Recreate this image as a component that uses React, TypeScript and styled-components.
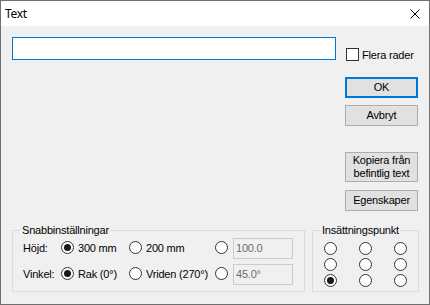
import * as React from 'react'
import styled, { createGlobalStyle } from 'styled-components'

const GlobalStyle = createGlobalStyle`
    html, body {
        margin: 0;
        padding: 0;
        background: #f0f0f0;
        overflow: hidden;
    }
    * {
        box-sizing: border-box;
    }
`

const App = () => (
    <>
        <GlobalStyle />
        <Window>
            <TitleBar>
                <Title>Text</Title>
                <CloseButton>
                    <svg width="10" height="10" viewBox="0 0 10 10">
                        <path d="M0.5 0.5 L9.5 9.5 M9.5 0.5 L0.5 9.5" stroke="#000" strokeWidth="1" />
                    </svg>
                </CloseButton>
            </TitleBar>
            <Content>
                <TopRow>
                    <TextInput />
                    <SideColumn>
                        <CheckRow>
                            <CheckBox />
                            <span>Flera rader</span>
                        </CheckRow>
                        <Button primary gap={16}>OK</Button>
                        <Button gap={7}>Avbryt</Button>
                        <Button gap={26} tall>
                            Kopiera från
                            <br />
                            befintlig text
                        </Button>
                        <Button gap={8}>Egenskaper</Button>
                    </SideColumn>
                </TopRow>
                <BottomRow>
                    <GroupBox width={293}>
                        <Caption>Snabbinställningar</Caption>
                        <QuickGrid>
                            <FieldLabel>Höjd:</FieldLabel>
                            <Option>
                                <Radio checked />
                                300 mm
                            </Option>
                            <Option>
                                <Radio />
                                200 mm
                            </Option>
                            <Radio />
                            <ValueBox>100.0</ValueBox>

                            <FieldLabel>Vinkel:</FieldLabel>
                            <Option>
                                <Radio checked />
                                Rak (0°)
                            </Option>
                            <Option>
                                <Radio />
                                Vriden (270°)
                            </Option>
                            <Radio />
                            <ValueBox>45.0°</ValueBox>
                        </QuickGrid>
                    </GroupBox>
                    <GroupBox width={107}>
                        <Caption>Insättningspunkt</Caption>
                        <PointGrid>
                            {Array.from({ length: 9 }).map((_, i) => (
                                <Radio key={i} checked={i === 6} />
                            ))}
                        </PointGrid>
                    </GroupBox>
                </BottomRow>
            </Content>
        </Window>
    </>
)

export default App

const Window = styled.div`
    width: 430px;
    height: 305px;
    border: 1px solid #6f6f6f;
    background: #f0f0f0;
    display: flex;
    flex-direction: column;
    font-family: 'Liberation Sans', Arial, sans-serif;
    font-size: 11px;
    letter-spacing: -0.2px;
    color: #000;
`

const TitleBar = styled.div`
    height: 25px;
    background: #fff;
    display: flex;
    align-items: center;
    justify-content: space-between;
    padding: 0 9px 0 4px;
`

const Title = styled.span`
    font-family: 'Noto Sans', 'Open Sans', sans-serif;
    font-size: 12px;
    letter-spacing: -0.3px;
    line-height: 16px;
    margin-top: 1px;
`

const CloseButton = styled.span`
    display: flex;
    width: 10px;
    height: 10px;
    margin-top: 1px;
`

const Content = styled.div`
    flex: 1;
    padding: 11px 0 0 11px;
    display: flex;
    flex-direction: column;
`

const TopRow = styled.div`
    display: flex;
    gap: 9px;
`

const TextInput = styled.div`
    width: 324px;
    height: 23px;
    background: #fff;
    border: 1px solid #0078d7;
`

const SideColumn = styled.div`
    width: 73px;
    display: flex;
    flex-direction: column;
`

const CheckRow = styled.div`
    display: flex;
    align-items: center;
    gap: 3px;
    margin: 11px 0 0 1px;
    height: 13px;
    white-space: nowrap;
`

const CheckBox = styled.span`
    width: 13px;
    height: 13px;
    border: 1px solid #333;
    background: #fff;
    flex: none;
`

const Button = styled.div<{ primary?: boolean; gap: number; tall?: boolean }>`
    margin-top: ${p => p.gap}px;
    height: ${p => (p.tall ? 30 : 21)}px;
    background: #e1e1e1;
    border: ${p => (p.primary ? '2px solid #0078d7' : '1px solid #adadad')};
    display: flex;
    align-items: center;
    justify-content: center;
    text-align: center;
    line-height: 13px;
    white-space: nowrap;
`

const BottomRow = styled.div`
    display: flex;
    gap: 7px;
    margin-top: 19px;
`

const GroupBox = styled.div<{ width: number }>`
    position: relative;
    width: ${p => p.width}px;
    height: 62px;
    border: 1px solid #dcdcdc;
`

const Caption = styled.span`
    position: absolute;
    top: -7px;
    left: 8px;
    padding: 0 1px;
    line-height: 13px;
    background: #f0f0f0;
    white-space: nowrap;
`

const QuickGrid = styled.div`
    display: grid;
    grid-template-columns: 38px 68px 86px 18px 60px;
    grid-auto-rows: 21px;
    row-gap: 5px;
    align-items: center;
    padding: 7px 0 0 10px;
`

const FieldLabel = styled.span`
    white-space: nowrap;
    margin-top: -2px;
`

const Option = styled.span`
    display: flex;
    align-items: center;
    gap: 4px;
    white-space: nowrap;
    margin-top: -2px;
`

const Radio = styled.span<{ checked?: boolean }>`
    position: relative;
    display: block;
    width: 13px;
    height: 13px;
    border-radius: 50%;
    border: 1px solid #333;
    background: #fff;
    flex: none;

    &::after {
        content: '';
        display: ${p => (p.checked ? 'block' : 'none')};
        position: absolute;
        left: 2px;
        top: 2px;
        width: 7px;
        height: 7px;
        border-radius: 50%;
        background: #1a1a1a;
    }

    ${QuickGrid} > & {
        margin-top: -2px;
    }
`

const ValueBox = styled.div`
    height: 21px;
    border: 1px solid #cccccc;
    background: #f0f0f0;
    color: #6d6d6d;
    padding: 3px 0 0 2px;
    line-height: 13px;
`

const PointGrid = styled.div`
    display: grid;
    grid-template-columns: repeat(3, 13px);
    grid-auto-rows: 13px;
    column-gap: 22px;
    row-gap: 3px;
    padding: 11px 0 0 11px;
`
